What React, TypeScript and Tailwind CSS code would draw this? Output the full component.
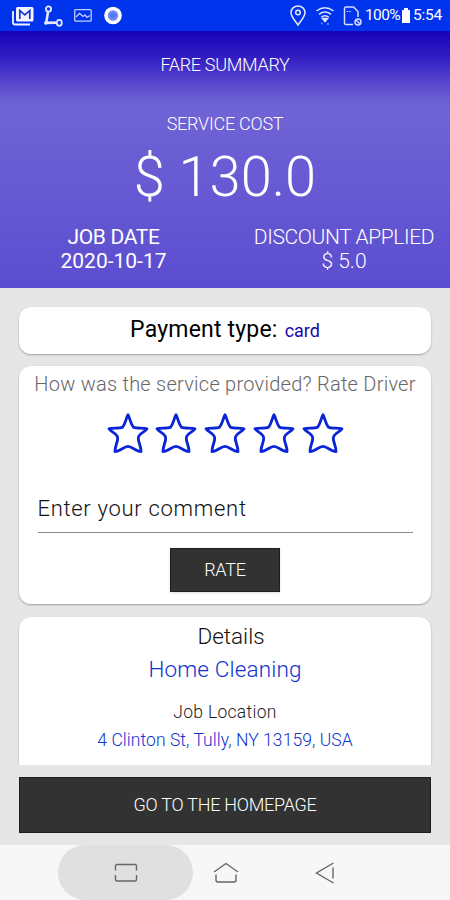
import type { ReactNode } from "react";

function StatusBar() {
  return (
    <div className="flex h-[31px] shrink-0 items-center justify-between bg-[#0033ec] pr-[9px] pl-3 text-white">
      <div className="flex h-full items-center">
        <svg width="23" height="20" viewBox="0 0 23 20" fill="none" stroke="#f3f3ff">
          <path d="M1 5v11.500q0 2 2 2H18" strokeWidth="1.800" />
          <rect x="4" y="1" width="17.500" height="14.500" rx="1.500" fill="#f3f3ff" stroke="none" />
          <path d="M7.800 13V4.500l5 4.300 5-4.300V13" stroke="#1736d8" strokeWidth="1.700" />
        </svg>
        <svg className="ml-2" width="21" height="22" viewBox="0 0 21 22" fill="none" stroke="#e4e8ff">
          <circle cx="5.500" cy="4" r="2.600" strokeWidth="1.800" />
          <path d="M5 7 3.200 17.800 13 17.600" strokeWidth="2.600" />
          <circle cx="2.800" cy="18" r="1.800" fill="#e4e8ff" stroke="none" />
          <ellipse cx="16.300" cy="17.800" rx="2.500" ry="3" strokeWidth="1.800" />
        </svg>
        <svg className="ml-2.5" width="18" height="13" viewBox="0 0 18 13" fill="none" stroke="#c4ccff" strokeWidth="1.300">
          <rect x=".700" y=".700" width="16.500" height="11.500" rx="1" />
          <path d="m2 8 3.500-3.500 3.500 3 2-1.500 2 2.500 3-2" />
        </svg>
        <svg className="ml-3" width="18" height="19" viewBox="0 0 18 19">
          <circle cx="9" cy="9.500" r="8.800" fill="#fff" />
          <circle cx="9" cy="9.500" r="5.200" fill="#6f8cf5" />
          <circle cx="9" cy="9.500" r="3" fill="#5577ef" />
        </svg>
      </div>
      <div className="flex h-full items-center font-normal">
        <svg width="16" height="21" viewBox="0 0 16 21" fill="none" stroke="#e4e8ff" strokeWidth="1.500">
          <path d="M8 20C5.500 16 1 12 1 7.500a7 6.600 0 0 1 14 0C15 12 10.500 16 8 20Z" />
          <circle cx="8" cy="7.500" r="2.300" />
        </svg>
        <svg className="ml-[9px]" width="20" height="20" viewBox="0 0 20 20" fill="none" stroke="#dde3ff" strokeWidth="1.500">
          <path d="M1.500 5Q10-1.500 18.500 5M4 8.300q6-4.500 12 0M6.300 11.200q3.700-3 7.400 0" />
          <path d="m7.500 12.500 2.500 3 2.500-3Z" fill="#fff" />
          <path d="M6 17.500h1.500M12 18h2" strokeOpacity=".6" />
        </svg>
        <svg className="ml-2" width="20" height="20" viewBox="0 0 20 20" fill="none" stroke="#d5dcff" strokeWidth="1.500">
          <path d="M10 18.500H3q-1.500 0-1.500-1.500V2.500Q1.500 1 3 1h7.500l4.500 4.500V11" />
          <path d="M4.500 5v1M7 5v1" />
          <circle cx="15" cy="16" r="3" />
          <path d="m13 14 4 4" />
        </svg>
        <span className="ml-[2px] w-[37px] text-[15.500px] tracking-[-0.600px]">100%</span>
        <span className="flex flex-col items-center">
          <span className="h-[2px] w-1 bg-white" />
          <span className="h-[13px] w-2 bg-white" />
        </span>
        <span className="ml-[3px] w-[28px] text-[15.500px] tracking-[-0.200px]">5:54</span>
      </div>
    </div>
  );
}

function Star() {
  return (
    <svg width="42" height="42" viewBox="0 0 42 42" fill="none" stroke="#0925d6" strokeWidth="2.800" strokeLinejoin="round">
      <path d="M21 2.800C23 6 23.500 12 26.500 15.300 30 17 36 15.500 40 16.800 38 20 31.500 21.500 31.300 26 31 30 34.500 35 34 39.500 29 39.500 25 34.300 21 34.300S13 39.500 8 39.500C7.500 35 11 30 10.700 26 10.500 21.500 4 20 2 16.800 6 15.500 12 17 15.500 15.300 18.500 12 19 6 21 2.800Z" />
    </svg>
  );
}

function Card({ className, children }: { className: string; children: ReactNode }) {
  return (
    <section className={`mx-[19px] shrink-0 bg-white shadow-[0_1px_2px_rgba(0,0,0,0.3)] ${className}`}>
      {children}
    </section>
  );
}

function NavigationBar() {
  return (
    <nav className="flex h-[55px] shrink-0 items-center bg-[#f7f7f7] pl-[58px] text-[#666]">
      <span className="flex h-full w-[135px] items-center justify-center rounded-full bg-[#e0e0e0]">
        <svg width="24" height="20" viewBox="0 0 24 20" fill="none" stroke="currentColor" strokeWidth="1.400">
          <path d="M1.500 7.500V3q0-1.500 1.500-1.500h18q1.500 0 1.500 1.500v4.500M1.500 12v4.500Q1.500 18 3 18h18q1.500 0 1.500-1.500V12" />
        </svg>
      </span>
      <svg className="ml-5" width="26" height="22" viewBox="0 0 26 22" fill="none" stroke="currentColor" strokeWidth="1.400">
        <path d="m1 10 12-8.500L25 10M3 12.500V18q0 2 2 2h16q2 0 2-2v-5.500" />
      </svg>
      <svg className="ml-[76px]" width="20" height="22" viewBox="0 0 20 22" fill="none" stroke="currentColor" strokeWidth="1.400">
        <path d="M18.500 1 1.500 11l17 10M18 5.500v11" />
      </svg>
    </nav>
  );
}

export default function App() {
  return (
    <div className="flex h-[900px] w-[450px] flex-col overflow-hidden bg-[#e6e6e6] font-[Roboto,sans-serif] font-light whitespace-nowrap">
      <StatusBar />
      <header className="flex h-[257px] shrink-0 flex-col items-center bg-[linear-gradient(#1802bb_0%,#3420c3_11%,#5746cd_20%,#6c60d3_27%,#6f63d5_32%,#5b4dd0_100%)] text-white">
        <h1 className="mt-[22px] text-[18px] leading-6 tracking-[-0.300px]">FARE SUMMARY</h1>
        <p className="mt-[35px] text-[18px] leading-6 tracking-[-0.250px]">SERVICE COST</p>
        <p className="mt-2 text-[56px] leading-[66px]">$ 130.0</p>
        <div className="mt-[15px] flex w-full">
          <div className="w-[227px] shrink-0 text-center text-[21px] leading-6 font-normal">
            <p className="tracking-[-0.350px]">JOB DATE</p>
            <p>2020-10-17</p>
          </div>
          <div className="w-[234px] shrink-0 text-center text-[21px] leading-6">
            <p className="tracking-[-0.400px]">DISCOUNT APPLIED</p>
            <p>$ 5.0</p>
          </div>
        </div>
      </header>

      <main className="flex h-[477px] shrink-0 flex-col overflow-hidden pt-[19px]">
        <Card className="flex h-[47px] items-center justify-center gap-[7px] rounded-xl">
          <span className="text-[23px] font-normal tracking-[0.200px] text-black">Payment type:</span>
          <span className="text-[18px] font-normal text-[#1c05a8]">card</span>
        </Card>
        <Card className="mt-3 flex h-[238px] flex-col items-center rounded-xl">
          <p className="mt-1.5 text-[20px] leading-6 tracking-[0.250px] text-[#666]">
            How was the service provided? Rate Driver
          </p>
          <div className="mt-4 flex gap-[6.750px]">
            <Star />
            <Star />
            <Star />
            <Star />
            <Star />
          </div>
          <div className="mt-[39px] flex h-[40px] w-[375px] border-b border-[#888] text-[22px] leading-8 tracking-[0.700px] text-[#111]">
            Enter your comment
          </div>
          <button className="mt-[15px] flex h-[44px] w-[110px] justify-center border border-[#1d1d1d] bg-[#323232] text-[18px] leading-[41px] tracking-[-0.200px] text-white shadow-sm">
            RATE
          </button>
        </Card>
        <Card className="mt-[13px] flex h-[160px] flex-col items-center rounded-t-xl">
          <h2 className="mt-[5px] ml-3 text-[22.500px] leading-7 text-[#111]">Details</h2>
          <p className="mt-[5px] text-[22.500px] leading-7 tracking-[0.150px] text-[#0f33cc]">Home Cleaning</p>
          <h3 className="mt-[17px] text-[17.500px] leading-6 tracking-[0.300px] text-[#222]">Job Location</h3>
          <p className="mt-1 text-[17.500px] leading-6 tracking-[0.060px] text-[#0f33cc]">
            4 Clinton St, Tully, NY 13159, USA
          </p>
        </Card>
      </main>

      <div className="h-[80px] shrink-0 px-[19px] pt-3">
        <button className="flex h-[56px] w-full justify-center border border-[#1d1d1d] bg-[#323232] text-[18px] leading-[53px] tracking-[-0.250px] text-white">
          GO TO THE HOMEPAGE
        </button>
      </div>
      <NavigationBar />
    </div>
  );
}
